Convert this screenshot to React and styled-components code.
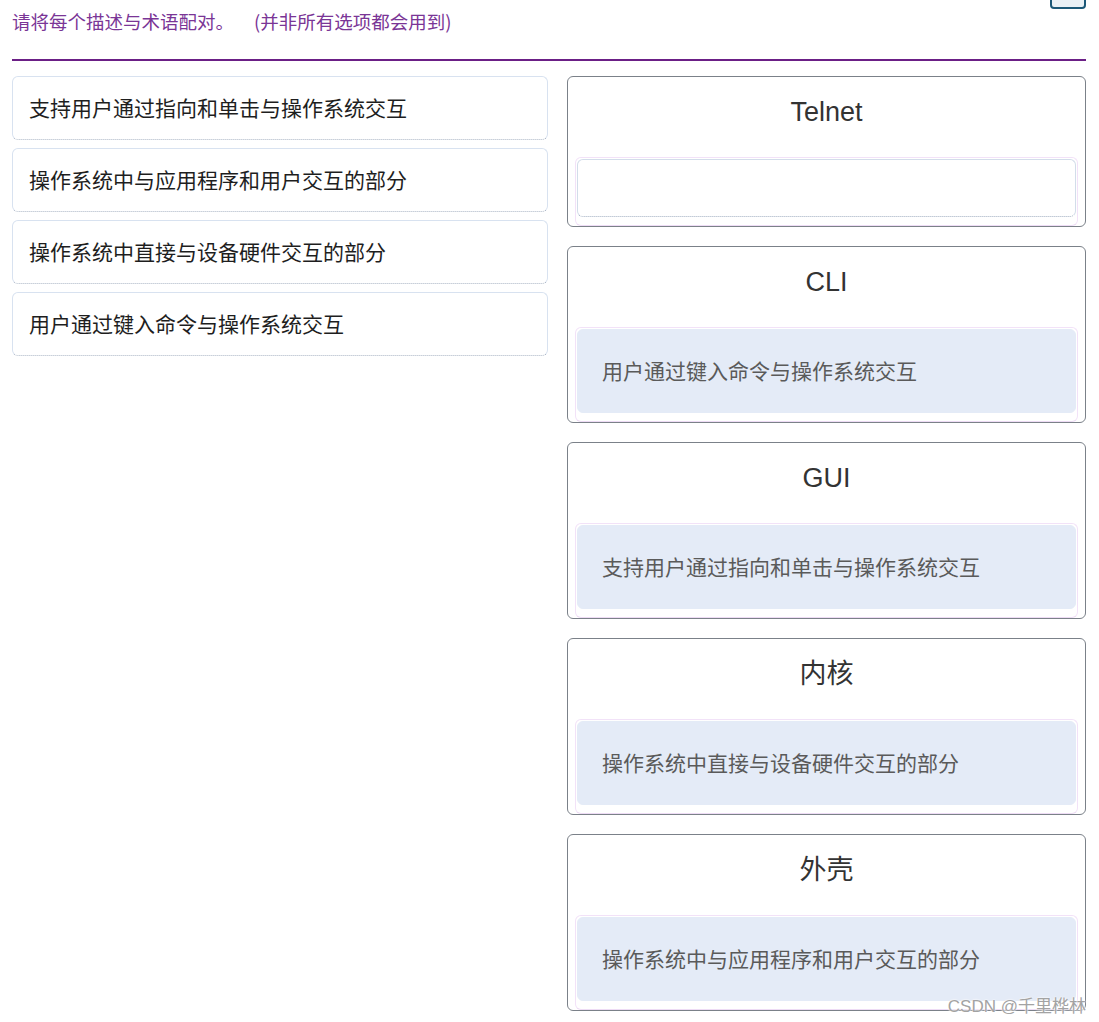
import styled, { createGlobalStyle } from 'styled-components';

const GlobalStyle = createGlobalStyle`
  body {
    margin: 0;
    background: #ffffff;
    font-family: "Liberation Sans", "Noto Sans CJK SC", sans-serif;
  }
`;

const Page = styled.div`
  position: relative;
  width: 1099px;
  min-height: 1022px;
  padding: 0 13px 0 12px;
  box-sizing: border-box;
`;

const Header = styled.div`
  display: flex;
  justify-content: space-between;
  align-items: flex-start;
  height: 59px;
  border-bottom: 2px solid #6b1f86;
  box-sizing: content-box;
`;

const Prompt = styled.p`
  display: flex;
  gap: 20px;
  margin: 8px 0 0;
  font-size: 18.5px;
  line-height: 26px;
  color: #7a3596;
  font-family: "Noto Sans CJK SC", sans-serif;
`;

const ToolButton = styled.div`
  width: 32px;
  height: 18px;
  margin-top: -13px;
  border: 2px solid #1b5878;
  border-radius: 4px;
  background: #e9f1f6;
`;

const Board = styled.div`
  display: grid;
  grid-template-columns: 536px 519px;
  column-gap: 19px;
  align-items: start;
  margin-top: 15px;
`;

const ChoiceList = styled.div`
  display: flex;
  flex-direction: column;
  gap: 8px;
`;

const Choice = styled.div`
  height: 64px;
  box-sizing: border-box;
  display: flex;
  align-items: center;
  padding: 0 0 3px 16px;
  border: 1px solid #d8e2f0;
  border-bottom: 1px dotted #a9b4c4;
  border-radius: 6px;
  font-family: "Noto Sans CJK SC", sans-serif;
  font-size: 21px;
  color: #1e1e1e;
`;

const TermList = styled.div`
  display: flex;
  flex-direction: column;
  gap: 19px;
`;

const TermCard = styled.div`
  border: 1px solid #7b8189;
  border-radius: 6px;
  padding: 0 7px;
`;

const TermTitle = styled.div`
  padding: 20px 0 30px;
  line-height: 30px;
  text-align: center;
  font-size: 27px;
  color: #333333;
  font-family: "Liberation Sans", "Noto Sans CJK SC", sans-serif;
`;

const Slot = styled.div`
  border: 1px solid #f2e2f8;
  border-bottom-color: #eedcf5;
  border-radius: 6px;
  padding: 1px 1px 8px;
`;

const DropZone = styled.div`
  box-sizing: border-box;
  height: ${(p) => (p.$filled ? '84px' : '58px')};
  display: flex;
  align-items: center;
  padding: 0 0 3px 24px;
  border-radius: 6px;
  border: 1px solid ${(p) => (p.$filled ? '#e4ebf7' : '#d3ddea')};
  border-bottom-style: ${(p) => (p.$filled ? 'solid' : 'dotted')};
  border-bottom-color: ${(p) => (p.$filled ? '#e4ebf7' : '#9eacbf')};
  background: ${(p) => (p.$filled ? '#e4ebf7' : '#ffffff')};
  font-family: "Noto Sans CJK SC", sans-serif;
  font-size: 21px;
  color: #5a5a5a;
`;

const Watermark = styled.div`
  position: absolute;
  right: 13px;
  top: 992px;
  font-family: "Liberation Sans", "Noto Sans CJK SC", sans-serif;
  font-size: 17px;
  color: #a3a3a3;
  text-shadow: 0 0 2px #ffffff, 0 0 2px #ffffff;
`;

const choices = [
  '支持用户通过指向和单击与操作系统交互',
  '操作系统中与应用程序和用户交互的部分',
  '操作系统中直接与设备硬件交互的部分',
  '用户通过键入命令与操作系统交互',
];

const terms = [
  { name: 'Telnet', answer: null },
  { name: 'CLI', answer: '用户通过键入命令与操作系统交互' },
  { name: 'GUI', answer: '支持用户通过指向和单击与操作系统交互' },
  { name: '内核', answer: '操作系统中直接与设备硬件交互的部分' },
  { name: '外壳', answer: '操作系统中与应用程序和用户交互的部分' },
];

export default function App() {
  return (
    <>
      <GlobalStyle />
      <Page>
        <Header>
          <Prompt>
            <span>请将每个描述与术语配对。</span>
            <span>(并非所有选项都会用到)</span>
          </Prompt>
          <ToolButton />
        </Header>
        <Board>
          <ChoiceList>
            {choices.map((c) => (
              <Choice key={c}>{c}</Choice>
            ))}
          </ChoiceList>
          <TermList>
            {terms.map((t) => (
              <TermCard key={t.name}>
                <TermTitle>{t.name}</TermTitle>
                <Slot>
                  <DropZone $filled={!!t.answer}>{t.answer}</DropZone>
                </Slot>
              </TermCard>
            ))}
          </TermList>
        </Board>
        <Watermark>CSDN @千里桦林</Watermark>
      </Page>
    </>
  );
}
